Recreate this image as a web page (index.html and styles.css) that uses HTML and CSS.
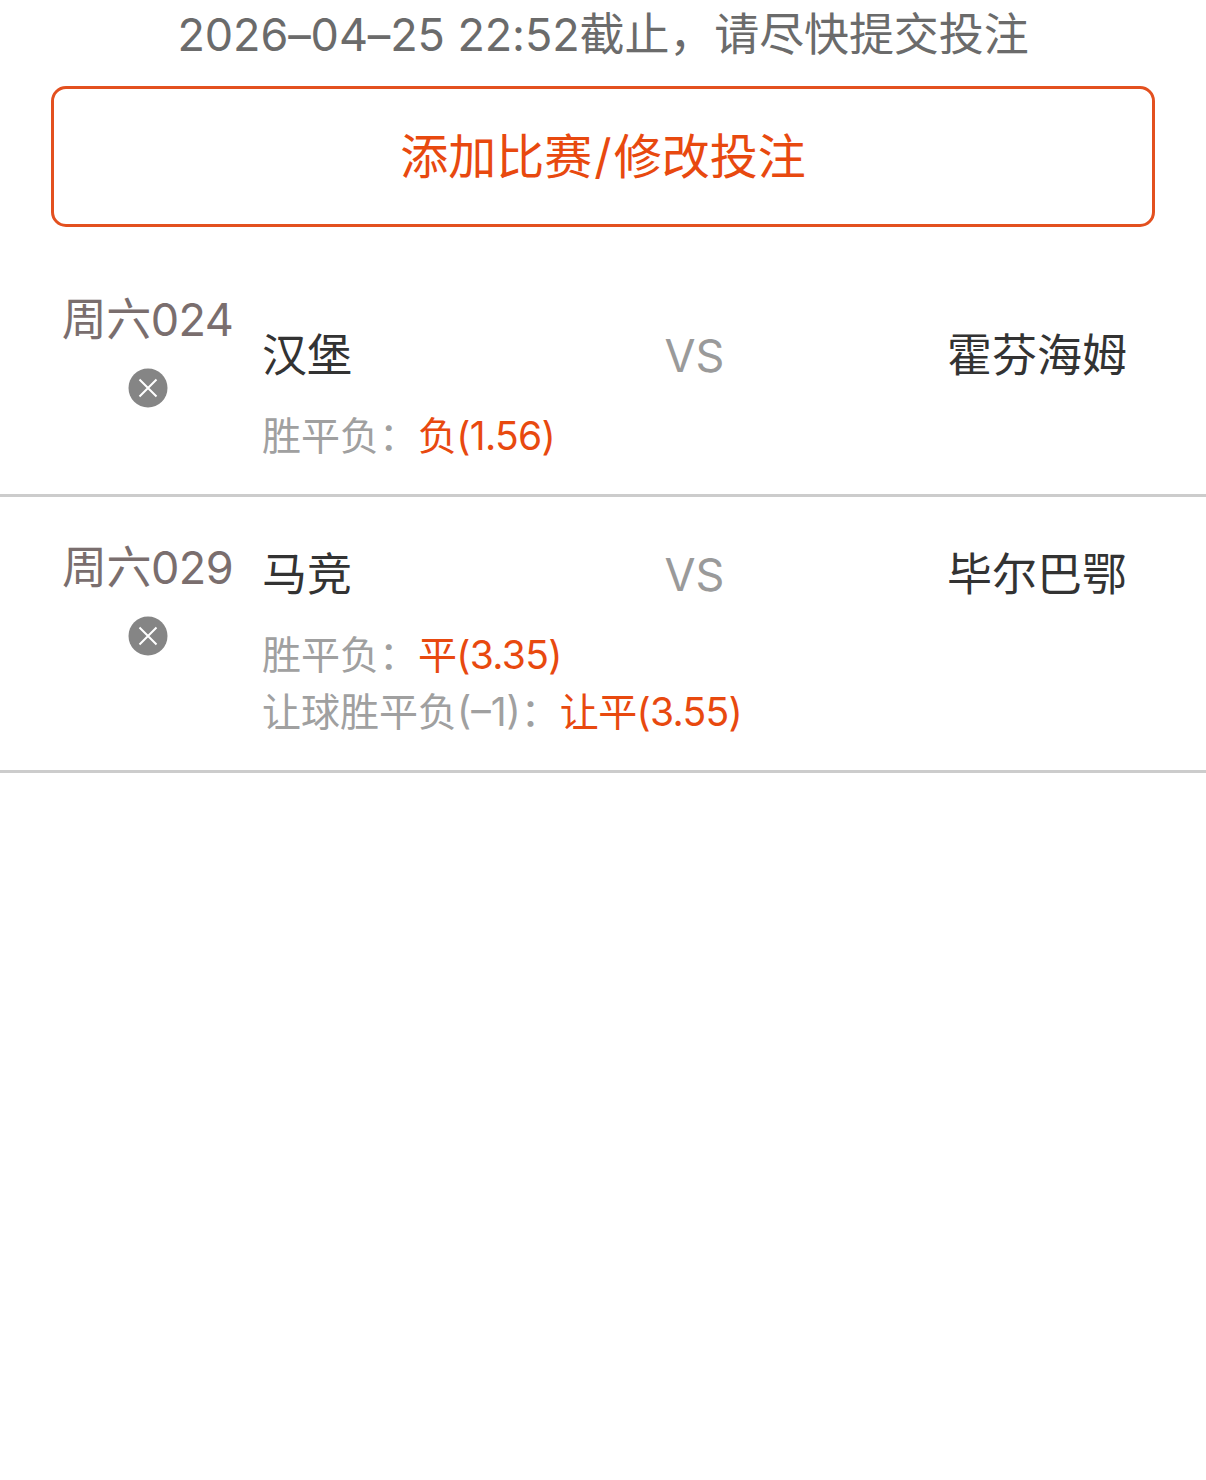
FILE: index.html
```html
<!DOCTYPE html>
<html lang="zh-CN">
<head>
    <meta charset="UTF-8">
    <meta name="viewport" content="width=device-width, initial-scale=1.0">
    <title>投注确认</title>
    <link rel="stylesheet" href="styles.css">
</head>
<body>
    <div class="notice">2026–04–25 22:52截止，请尽快提交投注</div>
    <div class="add-btn">添加比赛<span class="slash">/</span>修改投注</div>

    <div class="match first">
        <div class="side">
            <div class="no">周六024</div>
            <svg class="remove" viewBox="0 0 40 40">
                <circle cx="20" cy="20" r="19.5" fill="#858585"/>
                <path d="M11.5 11.5L28.5 28.5M28.5 11.5L11.5 28.5" stroke="#fff" stroke-width="2"/>
            </svg>
        </div>
        <div class="main">
            <div class="teams">
                <span class="home">汉堡</span>
                <span class="vs">VS</span>
                <span class="away">霍芬海姆</span>
            </div>
            <div class="bets">
                <div class="bet"><span class="label">胜平负：</span><span class="pick">负(1.56)</span></div>
            </div>
        </div>
    </div>

    <div class="match second">
        <div class="side">
            <div class="no">周六029</div>
            <svg class="remove" viewBox="0 0 40 40">
                <circle cx="20" cy="20" r="19.5" fill="#858585"/>
                <path d="M11.5 11.5L28.5 28.5M28.5 11.5L11.5 28.5" stroke="#fff" stroke-width="2"/>
            </svg>
        </div>
        <div class="main">
            <div class="teams">
                <span class="home">马竞</span>
                <span class="vs">VS</span>
                <span class="away">毕尔巴鄂</span>
            </div>
            <div class="bets">
                <div class="bet"><span class="label">胜平负：</span><span class="pick">平(3.35)</span></div>
                <div class="bet"><span class="label">让球胜平负(–1)：</span><span class="pick">让平(3.55)</span></div>
            </div>
        </div>
    </div>
</body>
</html>
```

FILE: styles.css
```css
body {
    font-family: Inter, "Noto Sans CJK SC", sans-serif;
    font-weight: 400;
    margin: 0;
    padding: 0;
    background-color: #fff;
    height: 1480px;
    overflow: hidden;
}

.notice {
    height: 86px;
    padding-top: 8px;
    box-sizing: border-box;
    font-size: 45px;
    line-height: 54px;
    letter-spacing: -0.1px;
    text-align: center;
    color: #6b6b6b;
}

.add-btn {
    height: 141px;
    margin: 0 51px;
    box-sizing: border-box;
    border: 3px solid #e3501f;
    border-radius: 15px;
    font-size: 48px;
    line-height: 135px;
    text-align: center;
    color: #e8490f;
}

.slash {
    padding: 0 2px;
}

.match {
    display: flex;
    box-sizing: border-box;
    border-bottom: 3px solid #cccccc;
}

.match.first {
    height: 270px;
    padding-top: 66px;
}

.match.second {
    height: 276px;
    padding-top: 44px;
}

.side {
    width: 262px;
    padding-left: 33px;
    box-sizing: border-box;
    display: flex;
    flex-direction: column;
    align-items: center;
    flex-shrink: 0;
}

.no {
    font-size: 45px;
    line-height: 54px;
    letter-spacing: -0.5px;
    color: #7a6e6e;
    white-space: nowrap;
}

.remove {
    width: 40px;
    height: 40px;
    margin-top: 21px;
}

.main {
    flex: 1;
    padding-right: 79px;
}

.teams {
    display: grid;
    grid-template-columns: 1fr 1fr 1fr;
    font-size: 45px;
    line-height: 54px;
    margin-top: 36px;
    color: #333;
}

.second .teams {
    margin-top: 7px;
}

.vs {
    text-align: center;
    color: #9a9a9a;
}

.away {
    text-align: right;
}

.bets {
    margin-top: 24px;
    font-size: 39px;
    line-height: 57px;
}

.second .bets {
    margin-top: 24px;
}

.bet {
    white-space: nowrap;
}

.label {
    color: #a0a0a0;
}

.pick {
    letter-spacing: -0.7px;
    color: #e8490f;
}
```
